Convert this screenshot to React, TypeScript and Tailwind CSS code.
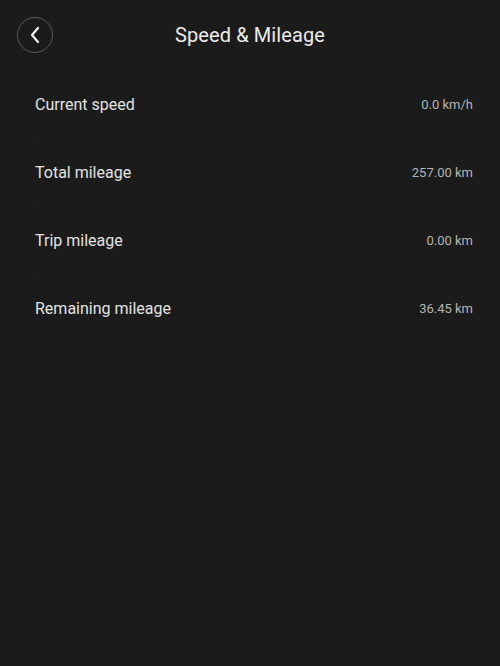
import React from 'react';

const rows = [
  { label: 'Current speed', value: '0.0 km/h' },
  { label: 'Total mileage', value: '257.00 km' },
  { label: 'Trip mileage', value: '0.00 km' },
  { label: 'Remaining mileage', value: '36.45 km' },
];

const App = () => {
  return (
    <div className="w-[500px] h-[666px] bg-[#1b1b1b] font-['Roboto',sans-serif]">
      {/* Header */}
      <div className="relative flex items-center justify-center h-[70px]">
        <button className="absolute left-[17px] top-[17px] w-9 h-9 rounded-full border border-[#5a5a5a] flex items-center justify-center">
          <svg width="12" height="18" viewBox="0 0 12 18" fill="none">
            <path d="M9 2L3 9l6 7" stroke="#f2f2f2" strokeWidth="2.2" strokeLinecap="round" strokeLinejoin="round" />
          </svg>
        </button>
        <h1 className="text-[20px] text-[#ececec] tracking-[0.1px]">Speed &amp; Mileage</h1>
      </div>

      {/* Rows */}
      <div className="pl-[35px] pt-[1px]">
        {rows.map((row, i) => (
          <div
            key={i}
            className={`flex items-center justify-between h-[68px] pr-[27px] ${i < rows.length - 1 ? 'border-b border-[#202020]' : ''}`}
          >
            <span className="text-[16px] text-[#e2e2e2]">{row.label}</span>
            <span className="text-[13px] text-[#b4b4b4]">{row.value}</span>
          </div>
        ))}
      </div>
    </div>
  );
};

export default App;
